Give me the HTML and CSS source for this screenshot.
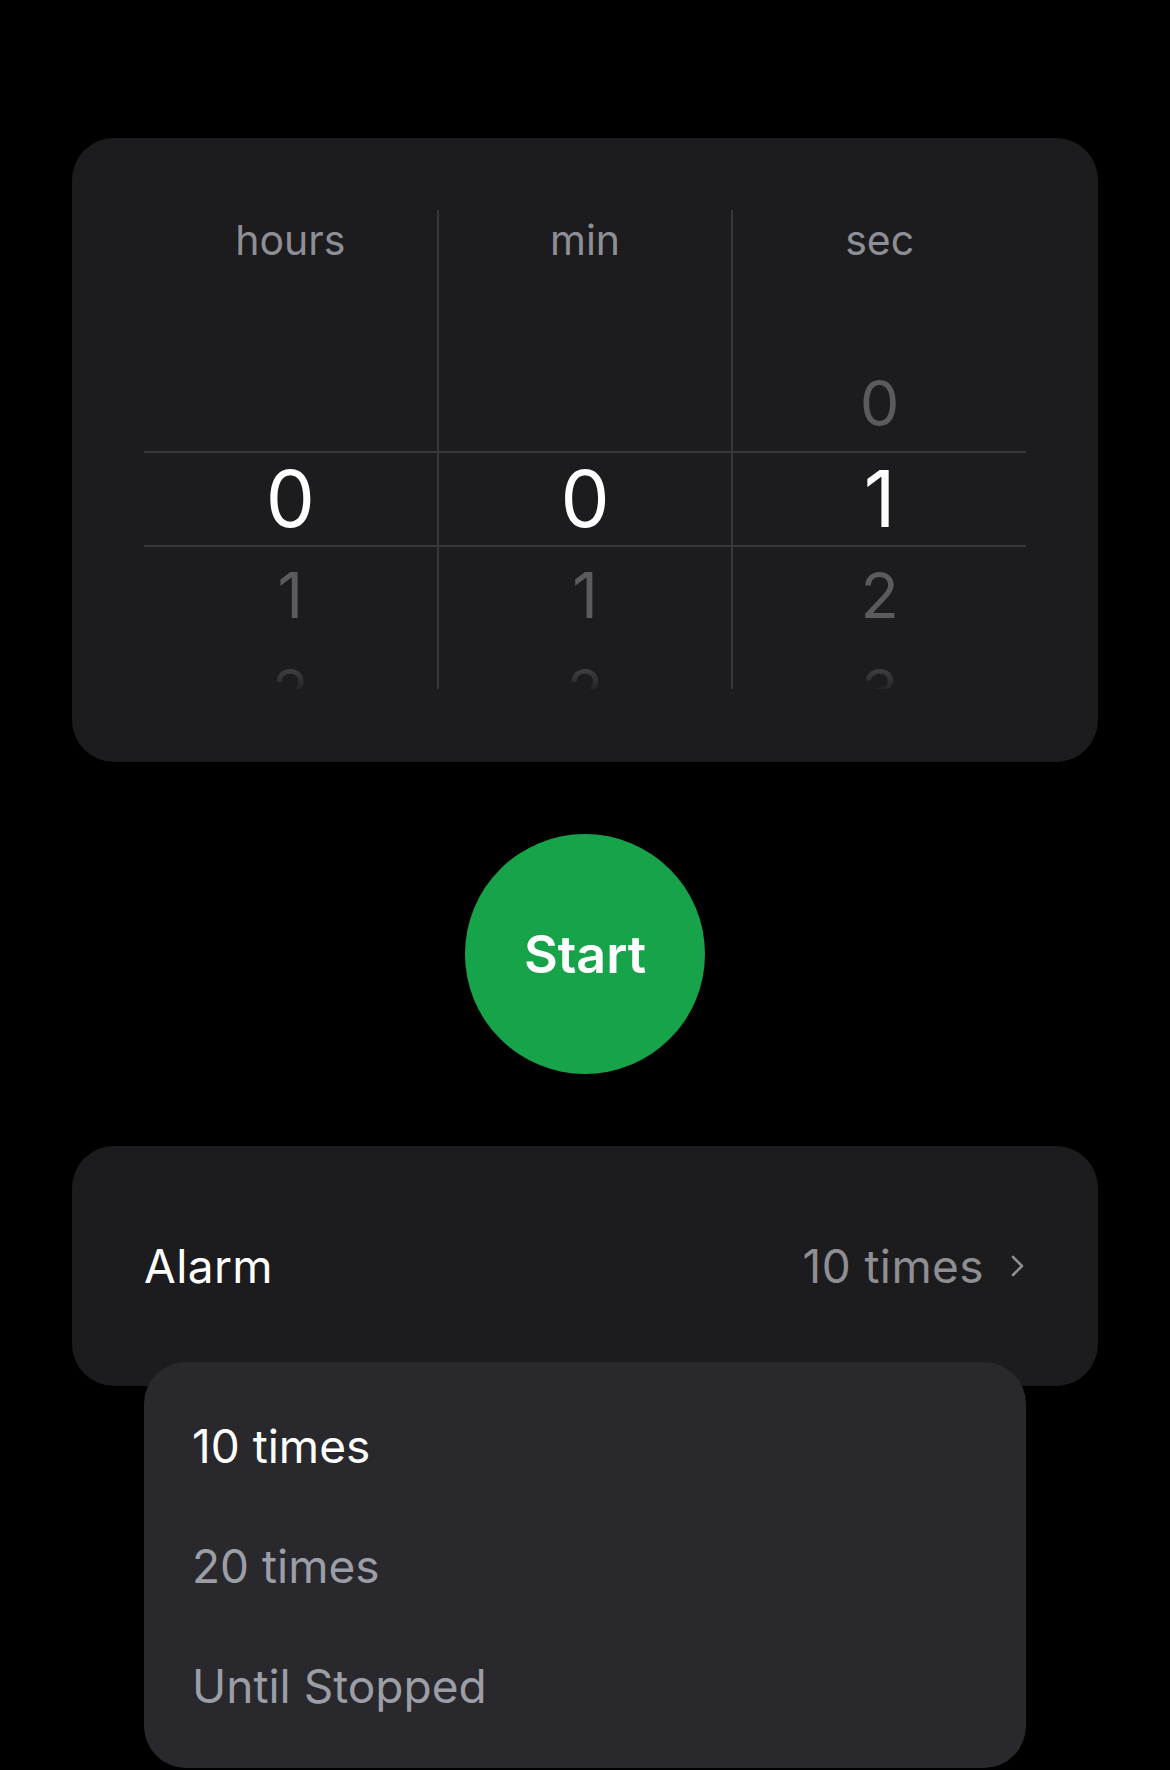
FILE: index.html
```html
<!DOCTYPE html>
<html lang="en">
<head>
<meta charset="utf-8">
<title>Timer</title>
<link rel="stylesheet" href="styles.css">
</head>
<body>
<div class="screen">
  <section class="card picker-card">
    <div class="picker">
      <div class="col">
        <div class="col-label">hours</div>
        <div class="wheel">
          <div class="row near"></div>
          <div class="row sel">0</div>
          <div class="row near">1</div>
          <div class="row far">2</div>
        </div>
      </div>
      <div class="col">
        <div class="col-label">min</div>
        <div class="wheel">
          <div class="row near"></div>
          <div class="row sel">0</div>
          <div class="row near">1</div>
          <div class="row far">2</div>
        </div>
      </div>
      <div class="col">
        <div class="col-label">sec</div>
        <div class="wheel">
          <div class="row near">0</div>
          <div class="row sel">1</div>
          <div class="row near">2</div>
          <div class="row far">3</div>
        </div>
      </div>
    </div>
  </section>

  <div class="start-wrap">
    <button class="start" type="button">Start</button>
  </div>

  <div class="alarm-block">
    <section class="card alarm-card">
      <span class="alarm-label">Alarm</span>
      <span class="alarm-value">10 times
        <svg class="chev" width="17" height="24" viewBox="0 0 17 24" aria-hidden="true">
          <path d="M4 3 L13 12 L4 21" fill="none" stroke="#8e8e93" stroke-width="2.6" stroke-linecap="round" stroke-linejoin="round"/>
        </svg>
      </span>
    </section>
    <ul class="menu">
      <li class="menu-item active">10 times</li>
      <li class="menu-item">20 times</li>
      <li class="menu-item">Until Stopped</li>
    </ul>
  </div>
</div>
</body>
</html>
```

FILE: styles.css
```css
html, body {
  margin: 0;
  padding: 0;
  background: #000;
}

body {
  height: 1770px;
  overflow: hidden;
  font-family: Inter, "Noto Sans", "Liberation Sans", sans-serif;
  color: #fff;
}

.screen {
  padding: 138px 72px 0;
}

.card {
  background: #1c1c1e;
  border-radius: 42px;
}

/* picker */
.picker-card {
  padding: 72px 72px 73px;
}

.picker {
  display: flex;
}

.col {
  flex: 1 1 0;
  display: flex;
  flex-direction: column;
  min-width: 0;
}

.col + .col {
  border-left: 2px solid #38383a;
}

.col-label {
  height: 60px;
  line-height: 60px;
  text-align: center;
  font-size: 41px;
  color: #8e8e96;
}

.wheel {
  height: 419px;
  box-sizing: border-box;
  padding-top: 85px;
  overflow: hidden;
}

.row {
  height: 96px;
  box-sizing: border-box;
  display: flex;
  align-items: center;
  justify-content: center;
  line-height: 1;
}

.row.sel {
  font-size: 78px;
  color: #fff;
  border-top: 2px solid #38383a;
  border-bottom: 2px solid #38383a;
}

.row.near {
  font-size: 63px;
  color: #5b5b5f;
}

.row.far {
  font-size: 60px;
  color: #48484c;
  -webkit-mask-image: linear-gradient(to bottom, #000 20%, rgba(0,0,0,0.3) 45%, transparent 55%);
  mask-image: linear-gradient(to bottom, #000 20%, rgba(0,0,0,0.3) 45%, transparent 55%);
}

/* start button */
.start-wrap {
  display: flex;
  justify-content: center;
  padding: 72px 0;
}

.start {
  width: 240px;
  height: 240px;
  border-radius: 50%;
  border: 0;
  background: #16a34a;
  color: #fff;
  font-family: Inter, "Noto Sans", sans-serif;
  font-weight: 600;
  font-size: 52px;
  padding: 0;
}

/* alarm */
.alarm-block {
  position: relative;
}

.alarm-card {
  height: 240px;
  box-sizing: border-box;
  padding: 0 72px;
  display: flex;
  align-items: center;
  justify-content: space-between;
}

.alarm-label {
  font-size: 46px;
  letter-spacing: 0.4px;
  color: #fff;
}

.alarm-value {
  display: flex;
  align-items: center;
  gap: 25px;
  font-size: 46px;
  letter-spacing: 0.4px;
  color: #8e8e93;
}

.chev {
  display: block;
}

.menu {
  position: absolute;
  top: calc(100% - 24px);
  left: 72px;
  right: 72px;
  margin: 0;
  padding: 24px 0 22px;
  list-style: none;
  background: #29292d;
  border-radius: 42px;
}

.menu-item {
  height: 120px;
  line-height: 120px;
  padding-left: 48px;
  font-size: 46px;
  color: #9b9ea6;
}

.menu-item.active {
  color: #fff;
}
```
